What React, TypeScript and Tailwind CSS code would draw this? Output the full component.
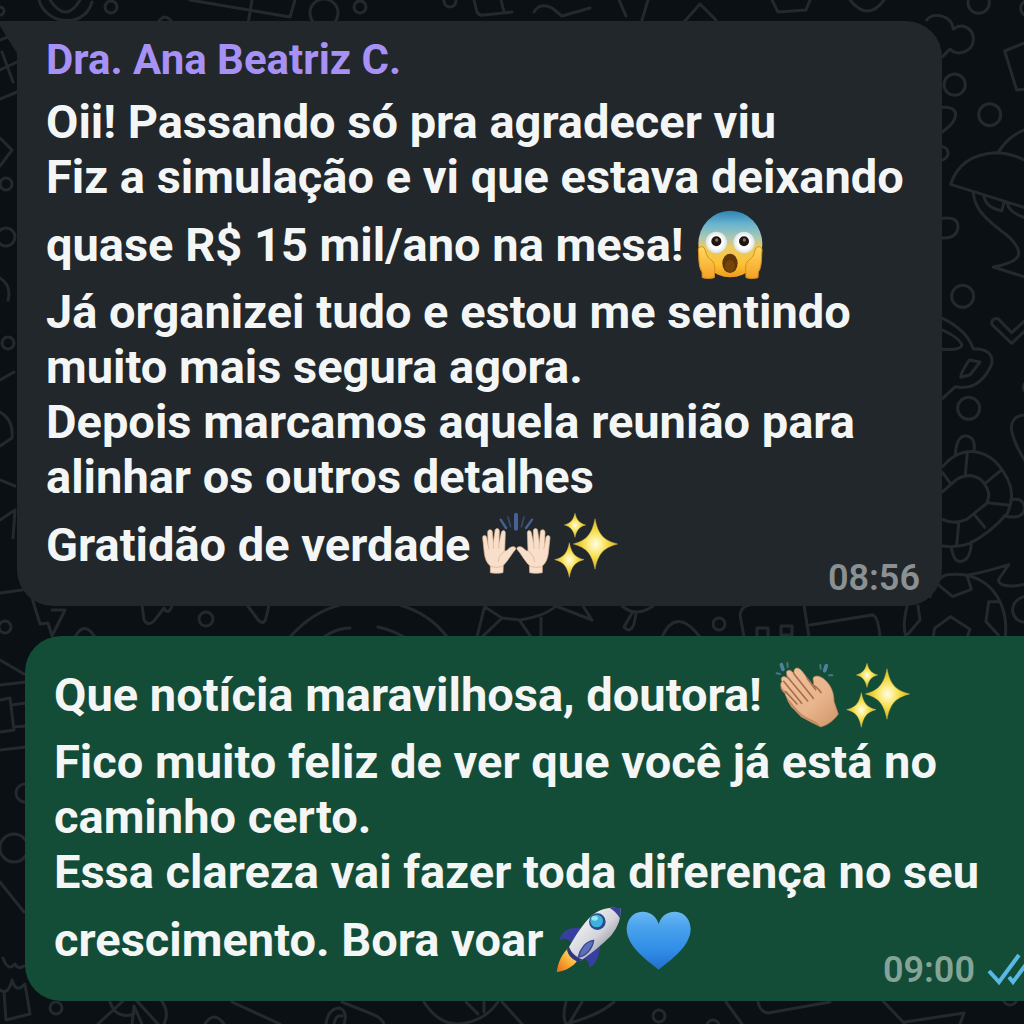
import type { ReactNode } from "react";

function Emoji({ label, viewBox, children }: { label: string; viewBox: string; children: ReactNode }) {
  return (
    <svg role="img" aria-label={label} viewBox={viewBox} className="h-[69px] w-[69px] shrink-0">
      {children}
    </svg>
  );
}

function ScreamEmoji() {
  return (
    <Emoji label="Rosto gritando de medo" viewBox="45 28 207 207">
      <defs>
        <linearGradient id="scream-face" x1="0" y1="0" x2="0" y2="1">
          <stop offset="0" stopColor="#2c83b4" />
          <stop offset="0.2" stopColor="#69b4cf" />
          <stop offset="0.4" stopColor="#a9c8b4" />
          <stop offset="0.55" stopColor="#eccb62" />
          <stop offset="0.8" stopColor="#fcc331" />
          <stop offset="1" stopColor="#ee9a1c" />
        </linearGradient>
        <linearGradient id="scream-hand" x1="0" y1="0" x2="0" y2="1">
          <stop offset="0" stopColor="#ffd860" />
          <stop offset="1" stopColor="#f3a224" />
        </linearGradient>
        <radialGradient id="scream-eye">
          <stop offset="0.6" stopColor="#ffffff" />
          <stop offset="1" stopColor="#d9e2e2" />
        </radialGradient>
      </defs>
      <ellipse cx="148" cy="130" rx="96" ry="100" fill="url(#scream-face)" />
      <circle cx="106" cy="125" r="32" fill="url(#scream-eye)" />
      <circle cx="189" cy="125" r="32" fill="url(#scream-eye)" />
      <circle cx="106" cy="122" r="15" fill="#1e1612" />
      <circle cx="189" cy="122" r="15" fill="#1e1612" />
      <circle cx="107" cy="118" r="5" fill="#8a6f62" />
      <circle cx="190" cy="118" r="5" fill="#8a6f62" />
      <ellipse cx="147" cy="188" rx="23" ry="29" fill="#5e3608" />
      <ellipse cx="147" cy="196" rx="15" ry="18" fill="#74440b" />
      <path d="M52 150C50 138 66 132 72 146C76 158 77 168 86 174C98 182 102 192 101 206L100 231Q82 236 64 231L63 214C52 200 54 170 52 150Z" fill="url(#scream-hand)" stroke="#dc8c1b" strokeWidth="3" />
      <path d="M243 150C245 138 229 132 223 146C219 158 218 168 209 174C197 182 193 192 194 206L195 231Q213 236 231 231L232 214C243 200 241 170 243 150Z" fill="url(#scream-hand)" stroke="#dc8c1b" strokeWidth="3" />
    </Emoji>
  );
}

function RaisedHand() {
  return (
    <>
      <path
        d="M61 216V196C50 187 45 174 43 158L38 112C37 103 47 102 50 110L54 132L53 95C53 85 66 84 67 94L70 127L75 90C76 81 88 82 88 91L87 128L94 96C96 87 107 88 106 98L104 151C110 153 115 142 124 139C131 136 141 140 136 147C126 157 114 181 100 194L99 216Q80 220 61 216Z"
        fill="#f8dfc9"
        stroke="#dcb598"
        strokeWidth="2"
      />
      <path d="M54 132L57 146M70 127L71 144M87 128L86 144M104 151C92 158 86 171 84 184M63 198Q80 203 98 197" fill="none" stroke="#dfb697" strokeWidth="2.5" />
    </>
  );
}

function RaisedHandsEmoji() {
  return (
    <Emoji label="Mãos levantadas" viewBox="36 28 207 207">
      <RaisedHand />
      <g transform="translate(278 0) scale(-1 1)">
        <RaisedHand />
      </g>
      <g stroke="#476096" strokeLinecap="round" fill="none">
        <path d="M138 42V84" strokeWidth="12" />
        <path d="M92 57L108 82M186 57L168 82" strokeWidth="7" />
        <path d="M114 49L122 78M162 49L154 78" strokeWidth="5" opacity="0.6" />
      </g>
    </Emoji>
  );
}

function SparklesEmoji() {
  return (
    <Emoji label="Brilhos" viewBox="243 28 207 207">
      <defs>
        <radialGradient id="spark">
          <stop offset="0" stopColor="#fffbe8" />
          <stop offset="0.25" stopColor="#fdf09a" />
          <stop offset="0.55" stopColor="#f5dc45" />
          <stop offset="1" stopColor="#d9ae22" />
        </radialGradient>
      </defs>
      <g fill="url(#spark)" stroke="#e9cf5a" strokeWidth="1">
        <path d="M375 54C384 100 400 119 443 130C400 141 384 160 375 206C366 160 350 141 310 130C350 119 366 100 375 54Z" />
        <path d="M315 38C320 58 328 68 347 73C328 78 320 88 315 110C310 88 302 78 283 73C302 68 310 58 315 38Z" />
        <path d="M298 126C304 156 314 170 342 177C314 184 304 198 298 230C292 198 282 184 254 177C282 170 292 156 298 126Z" />
      </g>
    </Emoji>
  );
}

function ClapEmoji() {
  return (
    <Emoji label="Palmas" viewBox="27 28 207 207">
      <defs>
        <linearGradient id="clap-skin" x1="0" y1="0" x2="1" y2="1">
          <stop offset="0" stopColor="#f0c29d" />
          <stop offset="0.6" stopColor="#e8b48c" />
          <stop offset="1" stopColor="#cf9368" />
        </linearGradient>
      </defs>
      <path d="M48 104C44 112 50 121 60 130L68 152L78 168L108 199L140 216L164 228L184 208L120 120L60 92Z" fill="#c98e68" />
      <path
        d="M51 92C44 82 54 73 64 80L70 84C62 68 62 58 74 59C80 60 84 66 88 70C84 56 92 48 103 54C110 58 120 72 126 82L144 103C150 98 140 86 146 79C156 72 171 79 181 89C199 105 208 130 207 152L220 190C206 210 186 225 166 229C156 214 144 211 128 203C106 192 88 170 76 153C66 142 57 130 62 124C50 114 42 104 51 92Z"
        fill="url(#clap-skin)"
        stroke="#b97c57"
        strokeWidth="2"
      />
      <path d="M56 92L110 158M70 82L128 151M87 70L145 143M126 82L152 117M62 123L96 160M144 103Q158 110 168 126" fill="none" stroke="#a86f4f" strokeWidth="5" strokeLinecap="round" />
      <g stroke="#4f839b" strokeLinecap="round" fill="none">
        <path d="M49 42L54 56M184 45L179 60" strokeWidth="11" />
        <path d="M67 37L68 49M35 68L45 70M166 43L167 54M192 74L202 74" strokeWidth="6" opacity="0.8" />
      </g>
    </Emoji>
  );
}

function RocketEmoji() {
  return (
    <Emoji label="Foguete" viewBox="30 28 207 207">
      <defs>
        <linearGradient id="rocket-body" x1="0.2" y1="0.2" x2="0.8" y2="0.8">
          <stop offset="0" stopColor="#f1f2f5" />
          <stop offset="0.55" stopColor="#d4d5da" />
          <stop offset="1" stopColor="#8f909c" />
        </linearGradient>
        <linearGradient id="rocket-flame" x1="1" y1="0" x2="0" y2="1">
          <stop offset="0" stopColor="#fff3a0" />
          <stop offset="0.5" stopColor="#fbb338" />
          <stop offset="1" stopColor="#e5691b" />
        </linearGradient>
      </defs>
      <path d="M44 134C48 108 70 94 108 97L82 144C70 128 58 126 44 134Z" fill="#37409f" />
      <path d="M166 142C164 174 158 202 134 216C132 200 128 192 112 186Z" fill="#37409f" />
      <path d="M70 158C50 176 40 198 35 229C60 226 84 214 99 192Z" fill="url(#rocket-flame)" />
      <path d="M72 154C92 120 112 86 142 58C168 38 196 33 226 38C229 66 220 94 198 120C170 148 140 172 106 196C90 188 76 174 72 154Z" fill="url(#rocket-body)" />
      <path d="M193 36Q210 34 226 38Q229 54 225 68Q214 48 193 36Z" fill="#3c3f98" />
      <path d="M72 154C80 172 92 184 112 191L102 200C82 192 70 180 66 163Z" fill="#31367f" />
      <path d="M146 134C124 136 106 158 100 184C120 182 142 162 146 134Z" fill="#5a70ba" stroke="#38458f" strokeWidth="4" />
      <circle cx="157" cy="78" r="25" fill="#294b8c" />
      <circle cx="155" cy="76" r="19" fill="#3eb1dc" />
      <ellipse cx="149" cy="68" rx="10" ry="7" fill="#9be3ef" />
    </Emoji>
  );
}

function BlueHeartEmoji() {
  return (
    <Emoji label="Coração azul" viewBox="237 28 207 207">
      <defs>
        <linearGradient id="heart" x1="0" y1="0" x2="0" y2="1">
          <stop offset="0" stopColor="#6bb9f2" />
          <stop offset="0.25" stopColor="#4ba3ee" />
          <stop offset="0.65" stopColor="#318ee6" />
          <stop offset="1" stopColor="#2270cd" />
        </linearGradient>
      </defs>
      <path d="M341 85C334 60 314 48 292 48C262 49 245 73 245 101C247 152 300 190 341 222C382 190 435 152 437 101C437 73 420 49 390 48C368 48 348 60 341 85Z" fill="url(#heart)" />
    </Emoji>
  );
}

function ReadTicks() {
  return (
    <svg role="img" aria-label="Lida" viewBox="0 0 60 34" className="h-[34px] w-[60px]" fill="none" stroke="#58b9e4" strokeWidth="4">
      <path d="M2 18L12 29L32 2" />
      <path d="M22 24L26 29L46 2" />
    </svg>
  );
}

function EmojiLine({ text, children }: { text: string; children: ReactNode }) {
  return (
    <p className="flex h-20 items-center gap-3">
      {text}
      <span className="flex">{children}</span>
    </p>
  );
}

function DoodleWallpaper() {
  return (
    <svg
      aria-hidden="true"
      viewBox="0 0 1024 1024"
      preserveAspectRatio="xMidYMin slice"
      className="absolute inset-0 -z-10 h-full w-full"
      fill="none"
      stroke="#23292d"
      strokeWidth="3"
      strokeLinejoin="round"
      strokeLinecap="round"
    >
      {/* top strip */}
      <path d="M39 0C45 24 84 30 92 2M50 0Q66 24 80 0M190 0L290 17L295 0M252 0L248 24M157 24Q165 10 173 24M474 0L477 12Q479 16 484 15L512 12M501 0L504 12" />
      <circle cx="111" cy="7" r="6" />
      <circle cx="324" cy="13" r="14" />
      <circle cx="360" cy="7" r="6" />
      <circle cx="450" cy="1" r="6" />
      <circle cx="0" cy="11" r="4" />
      <path d="M534 12Q540 2 552 8L562 16L590 8M619 0L626 16M648 0L642 20M684 22L700 4L716 20M772 0L778 12L806 10L810 0M850 0Q868 22 884 0" />

      {/* left edge */}
      <path d="M0 40L10 36M2 52L13 82M0 70L17 62M0 99L17 92M0 138L12 150L0 166M0 278Q12 286 8 300M0 380L14 372M0 412Q14 420 12 438L0 446M0 480L15 486M0 520L15 510L13 538" />
      <circle cx="6" cy="184" r="6" />
      <circle cx="6" cy="237" r="9" />
      <circle cx="8" cy="343" r="6" />
      <path d="M0 593L22 590M32 598L40 624L48 623L52 636L65 610L52 610" />
      <circle cx="5" cy="627" r="6" />
      <path d="M0 660L24 674M0 685L26 682M0 700L10 698L14 730L0 732M11 705L26 703M14 727L26 726M0 750L26 747M0 882L24 912M3 958Q8 972 15 964Q18 970 24 966M0 990Q8 996 12 980Q16 994 25 984L30 1014L6 1020L4 992" />
      <circle cx="25" cy="793" r="9" />
      <circle cx="14" cy="848" r="14" />

      {/* gap between the bubbles */}
      <path d="M142 605L144 620Q148 627 154 621L164 608Q168 616 172 606M247 605L259 621Q264 625 266 618L269 605M75 637Q84 620 95 637M290 637Q312 612 340 605M325 636Q338 628 350 628M378 627Q392 630 404 637M400 605Q430 614 447 637M485 605L477 637M485 607L502 618L482 637M502 618L520 620Q545 616 556 606L592 620L583 606M541 618V637M520 621L531 637M622 606Q636 618 653 606M632 613L624 627Q630 634 634 624L636 614M662 637Q676 606 700 637M744 637L740 615Q741 606 750 605M804 605L809 637M810 625L872 615Q878 615 880 637M757 637V628H768V637M781 635V626H792V635Z" />
      <circle cx="206" cy="619" r="7" />
      <circle cx="719" cy="624" r="6" />
      <path d="M907 606Q902 626 906 637M918 606L920 620L908 634" />

      {/* right edge */}
      <g transform="translate(930 0) scale(0.3333)" strokeWidth="9">
        <path d="M-10 60C10 34 65 46 70 87C100 64 132 90 130 120C128 156 82 170 60 147L38 170M38 322C90 318 90 360 38 395M38 440Q56 445 54 462Q52 474 38 480M300 122L224 153L260 270L300 266M62 553Q90 465 195 458Q250 458 300 490M62 553L300 628M206 455Q240 400 300 385M130 580C135 630 170 660 230 705C290 760 275 785 190 801L300 836M162 590Q170 625 216 632L222 606M232 610Q236 640 300 658M38 655Q84 648 84 682Q80 716 38 714" />
        <circle cx="146" cy="8" r="32" />
        <circle cx="296" cy="25" r="24" />
        <circle cx="74" cy="254" r="32" />
        <circle cx="179" cy="344" r="33" />
        <circle cx="98" cy="889" r="33" />
      </g>
      <g transform="translate(930 300) scale(0.3333)" strokeWidth="9">
        <path d="M38 55Q110 90 130 146Q190 146 186 190Q150 275 76 260L38 295M38 90Q90 115 96 136Q90 152 38 148M118 180L150 186L120 225L92 232Q92 218 118 180ZM300 78L245 130L186 74Q182 54 204 56L245 98L292 55M300 345Q245 340 244 385Q250 430 290 490M76 464Q80 406 108 408Q138 410 132 454M38 500Q80 450 132 455Q190 460 226 525Q260 580 232 640Q180 700 120 730Q80 745 38 738M38 575L80 538Q120 515 154 540Q190 580 168 612L110 658Q70 675 38 658M112 460L106 522M62 552L38 518M212 512L168 548M172 608L240 616M134 645L164 682M86 672L80 736M242 600Q280 590 284 625Q280 660 222 648M64 740Q70 788 94 784Q122 780 124 726M0 890Q10 840 50 824Q130 815 180 862Q235 920 226 1010M112 826Q170 815 236 794L205 840Q210 870 300 850M20 850L68 890L124 868L112 830M10 1010L14 985L62 950L120 988L112 1010M210 905H176L168 965L205 1005M300 885Q245 895 248 935Q255 970 300 968" />
        <circle cx="116" cy="325" r="33" />
        <circle cx="300" cy="262" r="20" />
      </g>

      {/* bottom strip */}
      <circle cx="56" cy="1008" r="6" />
      <path d="M98 1024L124 1000M110 1002Q116 1020 134 1014M136 1000L158 1024M161 1000Q170 1012 164 1024M132 1024L134 1006L142 1024M205 1024Q214 1010 224 1024M232 1002L280 1024M326 1024Q328 1008 340 1008Q348 1012 344 1024M334 1024Q336 1014 342 1016M342 1002L372 1014Q382 1018 384 1024M424 1002Q438 1024 458 1024Q484 1022 498 1002M466 1002L478 1014M484 1002V1012M502 1002L522 1024M566 1002Q562 1016 566 1024Q598 1016 614 1002M582 1002L570 1022M726 1002L742 1024M758 1002Q760 1012 768 1013L830 1002M883 1001L905 1024M905 1022L964 1013L960 1024" />
      <circle cx="659" cy="1016" r="6" />
      <circle cx="713" cy="1026" r="6" />
      <circle cx="1010" cy="998" r="7" />
    </svg>
  );
}

export default function App() {
  return (
    <main className="relative isolate flex min-h-screen flex-col gap-[30px] overflow-hidden bg-[#0a1014] pt-[21px] font-['Roboto',sans-serif] text-[47px] leading-[55px] font-bold text-[#f4f6f6]">
      <DoodleWallpaper />

      <article className="relative mr-[82px] ml-[17px] flex flex-col rounded-[36px] rounded-tl-none bg-[#21272b] pt-[13px] pr-[22px] pb-2 pl-[29px] whitespace-nowrap">
        <svg aria-hidden="true" viewBox="0 0 18 34" className="absolute top-0 -left-[17px] h-[34px] w-[18px]">
          <path d="M0 0H18V34L0 5Z" fill="#21272b" />
        </svg>
        <h2 className="mb-2 text-[42px] leading-[52px] font-bold text-[#a791f5]">Dra. Ana Beatriz C.</h2>
        <p>Oii! Passando só pra agradecer viu</p>
        <p>Fiz a simulação e vi que estava deixando</p>
        <EmojiLine text="quase R$ 15 mil/ano na mesa!">
          <ScreamEmoji />
        </EmojiLine>
        <p>Já organizei tudo e estou me sentindo</p>
        <p>muito mais segura agora.</p>
        <p>Depois marcamos aquela reunião para</p>
        <p>alinhar os outros detalhes</p>
        <EmojiLine text="Gratidão de verdade">
          <RaisedHandsEmoji />
          <SparklesEmoji />
        </EmojiLine>
        <time className="-mt-[26px] self-end text-[36px] leading-10 font-semibold text-[#8b9093]">08:56</time>
      </article>

      <article className="-mr-10 ml-[25px] flex flex-col rounded-[36px] bg-[#144d37] pt-[18px] pr-[17px] pb-[11px] pl-[29px] whitespace-nowrap">
        <EmojiLine text="Que notícia maravilhosa, doutora!">
          <ClapEmoji />
          <SparklesEmoji />
        </EmojiLine>
        <p>Fico muito feliz de ver que você já está no</p>
        <p>caminho certo.</p>
        <p>Essa clareza vai fazer toda diferença no seu</p>
        <EmojiLine text="crescimento. Bora voar">
          <RocketEmoji />
          <BlueHeartEmoji />
        </EmojiLine>
        <div className="-mt-[29px] flex items-center gap-3 self-end text-[36px] leading-10 font-semibold text-[#84a497]">
          <time>09:00</time>
          <ReadTicks />
        </div>
      </article>
    </main>
  );
}
